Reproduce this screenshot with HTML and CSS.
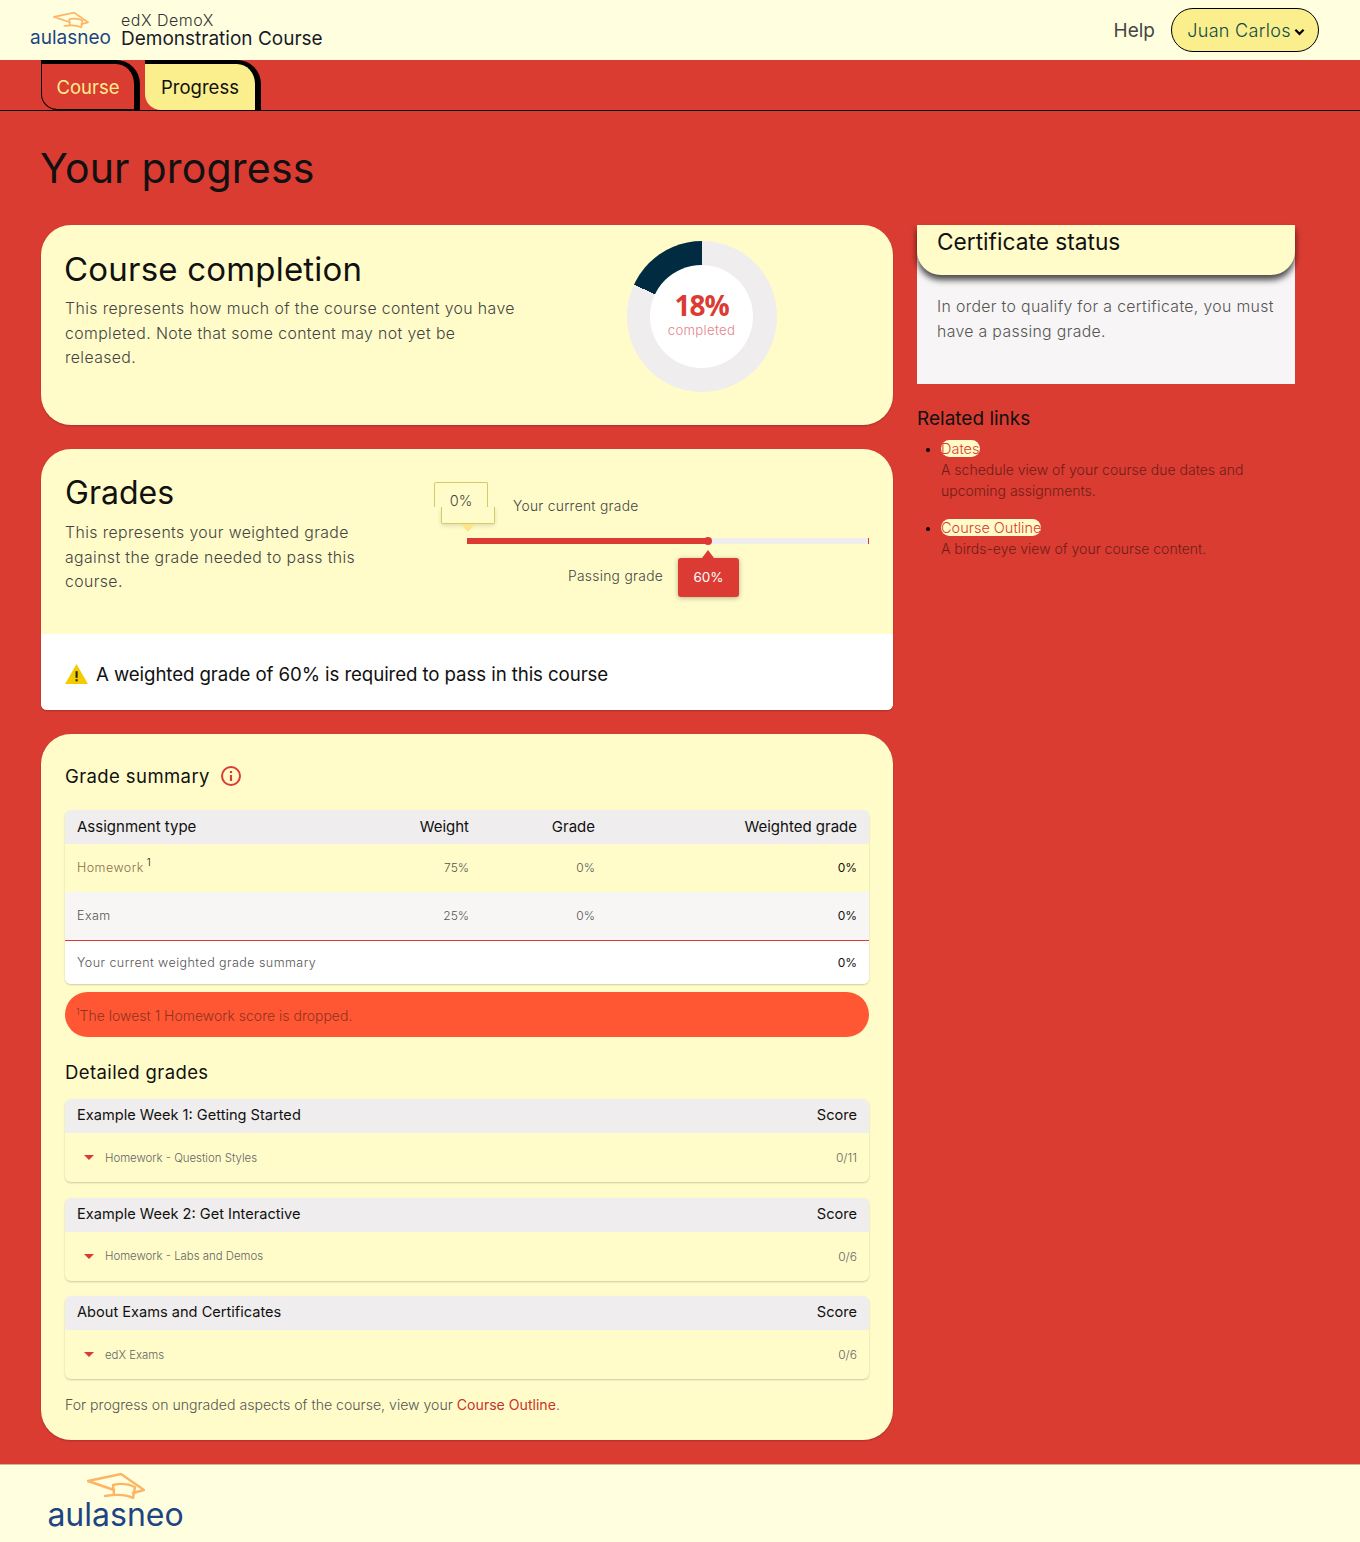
FILE: index.html
```html
<!DOCTYPE html>
<html>
<head>
    <title>Course Progress</title>
    <link rel="stylesheet" href="styles.css">
</head>
<body>

    <!-- Header -->
    <header class="header">
        <div class="logo logo-small">
            <svg class="cap" viewBox="0 0 58 28" fill="none" stroke="#fdb565" stroke-width="2.8" stroke-linejoin="round" stroke-linecap="round">
                <path d="M27 17 L1 8 L34 1 L57 17 L46 20"/>
                <path d="M27 21 L26 12 Q38 9 48 14 L46 25 Q36 20 18 23"/>
            </svg>
            <span class="logo-text">aulasneo</span>
        </div>
        <div class="course-title">
            <span class="course-org">edX DemoX</span>
            <span class="course-name">Demonstration Course</span>
        </div>
        <a class="help" href="#">Help</a>
        <button class="user-btn">Juan Carlos
            <svg class="chevron" viewBox="0 0 12 8" fill="none" stroke="#000" stroke-width="2.4"><path d="M1.5 1.5 L6 6 L10.5 1.5"/></svg>
        </button>
    </header>

    <!-- Tabs -->
    <nav class="tabs">
        <a class="tab tab-course" href="#">Course</a>
        <a class="tab tab-progress" href="#">Progress</a>
    </nav>

    <main class="main">
        <h1 class="page-title">Your progress</h1>

        <div class="layout">
            <div class="left-col">

                <!-- Course completion -->
                <section class="card completion">
                    <div class="completion-text">
                        <h2>Course completion</h2>
                        <p>This represents how much of the course content you have completed. Note that some content may not yet be released.</p>
                    </div>
                    <div class="donut">
                        <div class="donut-hole">
                            <span class="donut-value">18%</span>
                            <span class="donut-label">completed</span>
                        </div>
                    </div>
                </section>

                <!-- Grades -->
                <section class="card grades">
                    <div class="grades-top">
                        <div class="grades-text">
                            <h2>Grades</h2>
                            <p>This represents your weighted grade against the grade needed to pass this course.</p>
                        </div>
                        <div class="grade-chart">
                            <div class="tip-current-top">0%</div>
                            <div class="tip-current-bottom"></div>
                            <div class="tip-current-arrow"></div>
                            <span class="label-current">Your current grade</span>
                            <div class="bar">
                                <div class="bar-fill"></div>
                                <div class="bar-dot"></div>
                                <div class="bar-end"></div>
                            </div>
                            <span class="label-passing">Passing grade</span>
                            <div class="tip-passing">60%</div>
                        </div>
                    </div>
                    <div class="grades-alert">
                        <svg class="warn" viewBox="0 0 24 21"><path d="M12 0 L24 21 L0 21 Z" fill="#f3cc00"/><rect x="11" y="7.5" width="2.2" height="7" fill="#222"/><rect x="11" y="16" width="2.2" height="2.2" fill="#222"/></svg>
                        <span>A weighted grade of 60% is required to pass in this course</span>
                    </div>
                </section>

                <!-- Grade summary -->
                <section class="card summary">
                    <h3 class="summary-title">Grade summary
                        <svg class="info" viewBox="0 0 22 22" fill="none" stroke="#db3b32"><circle cx="11" cy="11" r="9" stroke-width="2"/><path d="M11 10 V16" stroke-width="2.2"/><path d="M11 6 V8" stroke-width="2.2"/></svg>
                    </h3>

                    <table class="grade-table">
                        <colgroup>
                            <col class="col-type"><col class="col-num"><col class="col-num"><col class="col-weighted">
                        </colgroup>
                        <thead>
                            <tr><th class="t-left">Assignment type</th><th>Weight</th><th>Grade</th><th>Weighted grade</th></tr>
                        </thead>
                        <tbody>
                            <tr class="row-hw"><td class="t-left name-hw">Homework<sup>1</sup></td><td>75%</td><td>0%</td><td class="strong">0%</td></tr>
                            <tr class="row-exam"><td class="t-left">Exam</td><td>25%</td><td>0%</td><td class="strong">0%</td></tr>
                        </tbody>
                        <tfoot>
                            <tr><td class="t-left" colspan="3">Your current weighted grade summary</td><td class="strong">0%</td></tr>
                        </tfoot>
                    </table>

                    <div class="drop-note"><sup>1</sup>The lowest 1 Homework score is dropped.</div>

                    <h3 class="detail-title">Detailed grades</h3>

                    <div class="detail">
                        <div class="detail-head"><span>Example Week 1: Getting Started</span><span>Score</span></div>
                        <div class="detail-row">
                            <span class="caret"></span><span class="detail-name">Homework - Question Styles</span><span class="detail-score">0/11</span>
                        </div>
                    </div>
                    <div class="detail">
                        <div class="detail-head"><span>Example Week 2: Get Interactive</span><span>Score</span></div>
                        <div class="detail-row">
                            <span class="caret"></span><span class="detail-name">Homework - Labs and Demos</span><span class="detail-score">0/6</span>
                        </div>
                    </div>
                    <div class="detail">
                        <div class="detail-head"><span>About Exams and Certificates</span><span>Score</span></div>
                        <div class="detail-row">
                            <span class="caret"></span><span class="detail-name">edX Exams</span><span class="detail-score">0/6</span>
                        </div>
                    </div>

                    <p class="ungraded">For progress on ungraded aspects of the course, view your <a href="#">Course Outline</a>.</p>
                </section>
            </div>

            <!-- Sidebar -->
            <aside class="right-col">
                <div class="cert">
                    <div class="cert-head">Certificate status</div>
                    <p>In order to qualify for a certificate, you must have a passing grade.</p>
                </div>
                <h3 class="related-title">Related links</h3>
                <ul class="related">
                    <li><a href="#">Dates</a><p>A schedule view of your course due dates and upcoming assignments.</p></li>
                    <li><a href="#">Course Outline</a><p>A birds-eye view of your course content.</p></li>
                </ul>
            </aside>
        </div>
    </main>

    <footer class="footer">
        <div class="logo logo-large">
            <svg class="cap" viewBox="0 0 58 28" fill="none" stroke="#fdb565" stroke-width="2.4" stroke-linejoin="round" stroke-linecap="round">
                <path d="M27 17 L1 8 L34 1 L57 17 L46 20"/>
                <path d="M27 21 L26 12 Q38 9 48 14 L46 25 Q36 20 18 23"/>
            </svg>
            <span class="logo-text">aulasneo</span>
        </div>
    </footer>

</body>
</html>
```

FILE: styles.css
```css
/* General */
body {
    margin: 0;
    background-color: #da3c32;
    font-family: 'Inter', 'Open Sans', sans-serif;
    color: #000;
}

h1, h2, h3, p {
    margin: 0;
    font-weight: 400;
}

a {
    text-decoration: none;
}

/* Header */
.header {
    height: 60px;
    box-sizing: border-box;
    background-color: #ffffdf;
    display: flex;
    align-items: center;
    padding: 0 41px 0 30px;
}

.logo {
    display: flex;
    flex-direction: column;
    color: #1d4585;
}

.logo-text {
    font-weight: 400;
    white-space: nowrap;
}

.logo-small {
    width: 81px;
    margin-right: 10px;
    align-items: center;
}

.logo-small .cap {
    width: 36px;
    height: 17px;
    margin-bottom: -1px;
}

.logo-small .logo-text {
    font-size: 19px;
    line-height: 20px;
}

.course-title {
    display: flex;
    flex-direction: column;
    flex: 1;
    padding-top: 1px;
}

.course-org {
    font-size: 16px;
    line-height: 17px;
    font-weight: 300;
    color: #333;
    letter-spacing: 0.5px;
}

.course-name {
    font-size: 19px;
    line-height: 20px;
    color: #1a1a2a;
}

.help {
    font-size: 19px;
    color: #454545;
    margin-right: 16px;
}

.user-btn {
    width: 148px;
    height: 44px;
    background-color: #fbee8c;
    border: 1px solid #000;
    border-radius: 22px;
    font-family: inherit;
    font-size: 18px;
    font-weight: 300;
    letter-spacing: 0.3px;
    color: #0c4a4a;
    padding: 0 0 0 2px;
    display: flex;
    align-items: center;
    justify-content: center;
    gap: 3px;
}

.chevron {
    width: 11px;
    height: 8px;
    margin-top: 3px;
}

/* Tabs */
.tabs {
    height: 50px;
    border-bottom: 1px solid #000;
    padding-left: 41px;
    display: flex;
    gap: 5px;
}

.tab {
    height: 50px;
    box-sizing: border-box;
    display: flex;
    align-items: center;
    justify-content: center;
    font-size: 18.5px;
    font-weight: 400;
    border-radius: 0 24px 0 16px;
    border-top: 4px solid #000;
    border-right: 6px solid #000;
    border-left: 1px solid #000;
    border-bottom: 1px solid #000;
}

.tab-course {
    width: 99px;
    color: #fbee8c;
}

.tab-progress {
    width: 116px;
    background-color: #fbee8c;
    color: #111;
    border-left: 0;
    border-bottom: 0;
}

/* Main */
.main {
    padding: 30px 65px 24px 41px;
}

.page-title {
    font-size: 41px;
    line-height: 54px;
    letter-spacing: 0.2px;
    margin-left: -1px;
    color: #111;
    margin-bottom: 30px;
}

.layout {
    display: flex;
    gap: 24px;
}

.left-col {
    width: 852px;
    display: flex;
    flex-direction: column;
    gap: 24px;
}

.right-col {
    width: 378px;
}

.card {
    background-color: #fffcc9;
    border-radius: 30px;
    box-shadow: 0 1px 2px rgba(0, 0, 0, 0.2);
}

.card h2 {
    font-size: 32px;
    line-height: 44px;
    color: #111;
}

.card p {
    font-weight: 300;
}

/* Completion card */
.completion {
    height: 200px;
    box-sizing: border-box;
    padding: 22px 24px 0;
    display: flex;
}

.completion-text {
    width: 470px;
}

.completion-text h2 {
    font-size: 33px;
    letter-spacing: 0.2px;
    margin-left: -1px;
}

.completion-text p, .grades-text p {
    font-size: 15.8px;
    line-height: 24.5px;
    letter-spacing: 0.4px;
    color: #444;
    margin-top: 6px;
    max-width: 460px;
}

.grades-text p {
    max-width: 310px;
}

.donut {
    width: 150px;
    height: 151px;
    border-radius: 50%;
    margin: -6px 0 0 92px;
    background: conic-gradient(#002b40 0 64.8deg, #efeded 64.8deg 360deg);
    transform: scaleX(-1);
    display: flex;
    align-items: center;
    justify-content: center;
}

.donut-hole {
    width: 103px;
    height: 103px;
    box-sizing: border-box;
    padding-top: 24px;
    border-radius: 50%;
    background-color: #fff;
    transform: scaleX(-1);
    display: flex;
    flex-direction: column;
    align-items: center;
}

.donut-value {
    font-family: 'Open Sans', sans-serif;
    font-size: 28px;
    line-height: 32px;
    font-weight: 700;
    letter-spacing: -1px;
    color: #db3b32;
}

.donut-label {
    font-size: 13.2px;
    line-height: 14px;
    letter-spacing: 0.3px;
    font-weight: 300;
    color: #e2848c;
    margin-top: 2px;
}

/* Grades card */
.grades {
    border-radius: 30px 30px 6px 6px;
    overflow: hidden;
}

.grades-top {
    height: 185px;
    box-sizing: border-box;
    padding: 22px 24px 0;
    display: flex;
}

.grades-text {
    width: 344px;
}

.grade-chart {
    position: relative;
    flex: 1;
}

.tip-current-top {
    position: absolute;
    left: 25px;
    top: 11px;
    width: 54px;
    height: 25px;
    box-sizing: border-box;
    background-color: #fffcc9;
    border: 1px solid #d5c96a;
    border-bottom: 0;
    border-radius: 2px 2px 0 0;
    font-size: 14.5px;
    font-weight: 300;
    color: #444;
    text-align: center;
    padding-top: 11px;
    line-height: 13px;
    z-index: 1;
}

.tip-current-bottom {
    position: absolute;
    left: 32px;
    top: 36px;
    width: 54px;
    height: 17px;
    box-sizing: border-box;
    background-color: #fffcc9;
    border: 1px solid #d5c96a;
    border-top: 0;
    border-radius: 0 0 2px 2px;
    box-shadow: 0 2px 4px rgba(0, 0, 0, 0.12);
}

.tip-current-arrow {
    position: absolute;
    left: 52px;
    top: 53px;
    width: 0;
    height: 0;
    border-left: 7px solid transparent;
    border-right: 7px solid transparent;
    border-top: 8px solid #fbe58c;
}

.label-current, .label-passing {
    position: absolute;
    font-size: 13.8px;
    line-height: 18px;
    letter-spacing: 0.3px;
    font-weight: 300;
    color: #444;
    white-space: nowrap;
}

.label-current {
    left: 104px;
    top: 26px;
}

.label-passing {
    left: 159px;
    top: 96px;
}

.bar {
    position: absolute;
    left: 58px;
    top: 67px;
    width: 402px;
    height: 6px;
    background-color: #efeded;
}

.bar-fill {
    width: 241px;
    height: 6px;
    background-color: #db3b32;
}

.bar-dot {
    position: absolute;
    left: 237px;
    top: -1px;
    width: 8px;
    height: 8px;
    border-radius: 50%;
    background-color: #db3b32;
}

.bar-end {
    position: absolute;
    right: 0;
    top: 0;
    width: 1px;
    height: 6px;
    background-color: #db3b32;
}

.tip-passing {
    position: absolute;
    left: 269px;
    top: 87px;
    width: 61px;
    height: 39px;
    border-radius: 3px;
    background-color: #db3b32;
    box-shadow: 0 1px 5px rgba(0, 0, 0, 0.3);
    color: #fff;
    font-size: 13.5px;
    text-align: center;
    line-height: 39px;
}

.tip-passing::before {
    content: '';
    position: absolute;
    left: 24px;
    top: -8px;
    border-left: 6px solid transparent;
    border-right: 6px solid transparent;
    border-bottom: 8px solid #db3b32;
}

.grades-alert {
    height: 76px;
    box-sizing: border-box;
    background-color: #fff;
    padding: 4px 24px 0;
    display: flex;
    align-items: center;
    gap: 8px;
    font-size: 18.7px;
    color: #111;
    letter-spacing: -0.1px;
}

.warn {
    width: 23px;
    height: 20px;
}

/* Grade summary card */
.summary {
    height: 706px;
    box-sizing: border-box;
    padding: 30px 24px 0;
}

.summary-title, .detail-title {
    font-size: 18.5px;
    line-height: 24px;
    letter-spacing: 0.4px;
    color: #111;
}

.summary-title {
    display: flex;
    align-items: center;
    gap: 10px;
    margin-bottom: 22px;
}

.info {
    width: 22px;
    height: 22px;
}

.grade-table {
    width: 804px;
    border-collapse: separate;
    border-spacing: 0;
    table-layout: fixed;
    font-size: 12px;
    font-weight: 300;
    color: #555;
    border-radius: 6px;
    box-shadow: 0 1px 2px rgba(0, 0, 0, 0.2);
}

.col-type { width: 290px; }
.col-num { width: 126px; }
.col-weighted { width: 262px; }

.grade-table th, .grade-table td {
    padding: 0 12px;
    text-align: right;
}

.grade-table .t-left {
    text-align: left;
}

.grade-table td.t-left {
    font-size: 12.5px;
    letter-spacing: 0.45px;
}

.grade-table th {
    height: 34px;
    padding-bottom: 2px;
    box-sizing: border-box;
    background-color: #efeded;
    font-size: 15px;
    font-weight: 400;
    color: #111;
}

.grade-table thead th:first-child { border-radius: 6px 0 0 0; }
.grade-table thead th:last-child { border-radius: 0 6px 0 0; }

.grade-table tbody td {
    height: 48px;
    padding-bottom: 2px;
    box-sizing: border-box;
}

.grade-table .name-hw {
    color: #8a6f4a;
}

.grade-table sup {
    font-size: 10px;
    color: #111;
    margin-left: 3px;
    line-height: 0;
}

.grade-table .row-exam td {
    height: 49px;
    background-color: #f8f6f5;
    border-bottom: 1px solid #db3b32;
}

.grade-table tfoot td {
    height: 43px;
    background-color: #fff;
}

.grade-table tfoot td:first-child { border-radius: 0 0 0 6px; }
.grade-table tfoot td:last-child { border-radius: 0 0 6px 0; }

.grade-table .strong {
    font-weight: 400;
    color: #111;
}

.drop-note {
    height: 45px;
    margin-top: 8px;
    box-sizing: border-box;
    padding: 0 14px 0 11px;
    border-radius: 23px;
    background-color: #ff5733;
    color: #8f3321;
    font-size: 14px;
    font-weight: 300;
    line-height: 48px;
}

.drop-note sup {
    font-size: 9px;
    line-height: 0;
}

.detail-title {
    margin: 23px 0 15px;
}

.detail {
    width: 804px;
    height: 83px;
    margin-bottom: 15.5px;
    border-radius: 6px;
    box-shadow: 0 1px 2px rgba(0, 0, 0, 0.2);
}

.detail-head {
    height: 34px;
    box-sizing: border-box;
    padding: 0 12px 2px;
    background-color: #efeded;
    border-radius: 6px 6px 0 0;
    display: flex;
    align-items: center;
    justify-content: space-between;
    font-size: 14.6px;
    color: #111;
}

.detail-row {
    height: 49px;
    box-sizing: border-box;
    padding: 0 12px 0 19px;
    display: flex;
    align-items: center;
    font-size: 11.4px;
    font-weight: 300;
    color: #666;
}

.caret {
    width: 0;
    height: 0;
    border-left: 5px solid transparent;
    border-right: 5px solid transparent;
    border-top: 5px solid #db3b32;
    margin-right: 11px;
}

.detail-name {
    flex: 1;
}

.detail-score {
    font-size: 12px;
}

.ungraded {
    font-size: 14.1px;
    line-height: 20px;
    color: #555;
    margin-top: 16px;
}

.ungraded a {
    color: #c9352c;
    font-weight: 400;
}

/* Sidebar */
.cert {
    height: 159px;
    background-color: #f7f5f5;
}

.cert-head {
    height: 50px;
    box-sizing: border-box;
    padding: 3px 20px 0;
    background-color: #fffcc9;
    border-radius: 0 0 24px 24px;
    box-shadow: 0 5px 6px rgba(0, 0, 0, 0.7);
    font-size: 22.7px;
    line-height: 28px;
    color: #111;
}

.cert p {
    padding: 19px 20px 0;
    font-size: 15.8px;
    line-height: 25px;
    letter-spacing: 0.35px;
    font-weight: 300;
    color: #555;
}

.related-title {
    font-size: 19px;
    line-height: 24px;
    color: #111;
    margin-top: 23px;
}

.related {
    list-style: disc;
    margin: 7px 0 0;
    padding-left: 24px;
    font-size: 14px;
}

.related li {
    margin-bottom: 16px;
}

.related li::marker {
    font-size: 12px;
}

.related a {
    background-color: #fffcc9;
    color: #db3b32;
    border-radius: 9px;
    line-height: 21px;
    font-weight: 300;
    font-size: 14.5px;
}

.related p {
    font-size: 14px;
    line-height: 21px;
    font-weight: 300;
    color: #6e1c18;
}

/* Footer */
.footer {
    height: 78px;
    box-sizing: border-box;
    background-color: #ffffdf;
    border-top: 1px solid #c9b8a8;
    padding: 8px 0 0 48px;
}

.logo-large {
    width: 135px;
    align-items: center;
}

.logo-large .cap {
    width: 58px;
    height: 28px;
    margin-left: 1px;
}

.logo-large .logo-text {
    font-size: 32px;
    line-height: 28px;
}
```
